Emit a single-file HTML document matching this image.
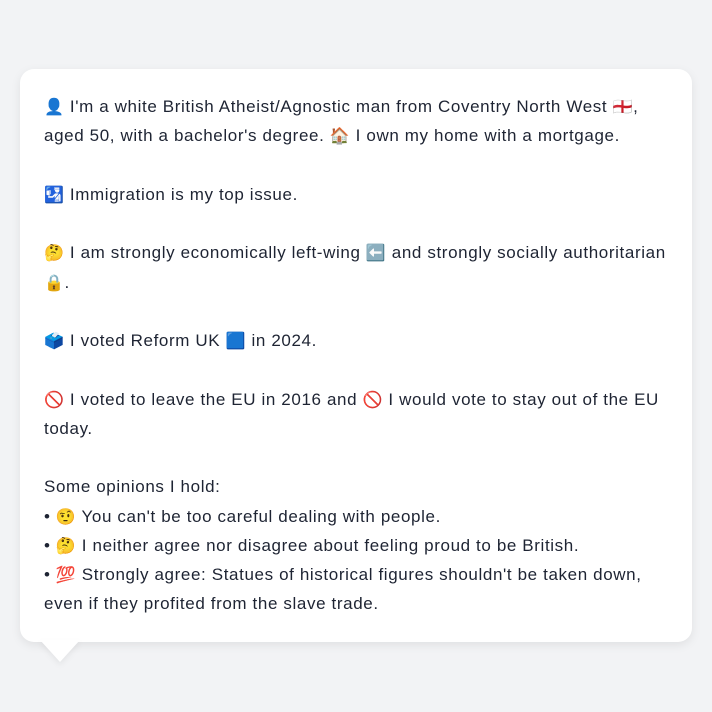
<!DOCTYPE html>
<html><head><meta charset="utf-8"><style>
html,body{margin:0;padding:0;width:712px;height:712px;background:#f2f3f5;overflow:hidden}
.card{position:absolute;left:20px;top:69px;width:672px;height:573px;background:#fff;border-radius:14px;box-shadow:0 3px 10px rgba(0,0,0,0.08)}
.tail{position:absolute;left:40px;top:640px;width:0;height:0;border-left:20px solid transparent;border-right:20px solid transparent;border-top:22px solid #fff;filter:drop-shadow(0 3px 3px rgba(0,0,0,0.06))}
.txt{position:absolute;left:44px;top:92px;font-family:"Liberation Sans","Noto Sans CJK JP",sans-serif;font-size:17px;color:#1e2433;white-space:nowrap;letter-spacing:0.62px}
.txt div{height:29.25px;line-height:29.25px;overflow:visible}
.e{font-size:16px;line-height:1}
</style></head><body>
<div class="card"></div>
<div class="tail"></div>
<div class="txt">
<div><span class="e">👤</span> I'm a white British Atheist/Agnostic man from Coventry North West <span class="e">🏴󠁧󠁢󠁥󠁮󠁧󠁿</span>,</div>
<div>aged 50, with a bachelor's degree. <span class="e">🏠</span> I own my home with a mortgage.</div>
<div></div>
<div><span class="e">🛂</span> Immigration is my top issue.</div>
<div></div>
<div><span class="e">🤔</span> I am strongly economically left-wing <span class="e">⬅️</span> and strongly socially authoritarian</div>
<div><span class="e">🔒</span>.</div>
<div></div>
<div><span class="e">🗳️</span> I voted Reform UK <span class="e">🟦</span> in 2024.</div>
<div></div>
<div><span class="e">🚫</span> I voted to leave the EU in 2016 and <span class="e">🚫</span> I would vote to stay out of the EU</div>
<div>today.</div>
<div></div>
<div>Some opinions I hold:</div>
<div>• <span class="e">🤨</span> You can't be too careful dealing with people.</div>
<div>• <span class="e">🤔</span> I neither agree nor disagree about feeling proud to be British.</div>
<div>• <span class="e">💯</span> Strongly agree: Statues of historical figures shouldn't be taken down,</div>
<div>even if they profited from the slave trade.</div>
</div>
</body></html>
